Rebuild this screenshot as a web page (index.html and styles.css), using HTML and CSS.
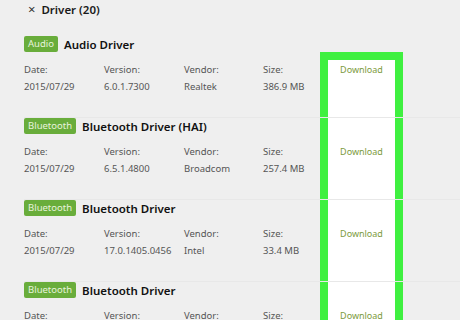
FILE: index.html
```html
<!DOCTYPE html>
<html>

<head>
    <meta charset="utf-8">
    <title>Driver</title>

    <link rel="stylesheet" href="styles.css">
</head>

<body>

    <div class="page">
        <header class="top-bar">
            <span class="close">&times;</span>
            <span class="top-title">Driver (20)</span>
        </header>

        <div class="highlight"></div>

        <section class="driver">
            <div class="driver-head">
                <span class="badge">Audio</span>
                <span class="driver-name">Audio Driver</span>
            </div>
            <div class="meta">
                <div><span class="label">Date:</span>2015/07/29</div>
                <div><span class="label">Version:</span>6.0.1.7300</div>
                <div><span class="label">Vendor:</span>Realtek</div>
                <div><span class="label">Size:</span>386.9 MB</div>
                <a class="download">Download</a>
            </div>
        </section>

        <section class="driver">
            <div class="driver-head">
                <span class="badge">Bluetooth</span>
                <span class="driver-name">Bluetooth Driver (HAI)</span>
            </div>
            <div class="meta">
                <div><span class="label">Date:</span>2015/07/29</div>
                <div><span class="label">Version:</span>6.5.1.4800</div>
                <div><span class="label">Vendor:</span>Broadcom</div>
                <div><span class="label">Size:</span>257.4 MB</div>
                <a class="download">Download</a>
            </div>
        </section>

        <section class="driver">
            <div class="driver-head">
                <span class="badge">Bluetooth</span>
                <span class="driver-name">Bluetooth Driver</span>
            </div>
            <div class="meta">
                <div><span class="label">Date:</span>2015/07/29</div>
                <div><span class="label">Version:</span>17.0.1405.0456</div>
                <div><span class="label">Vendor:</span>Intel</div>
                <div><span class="label">Size:</span>33.4 MB</div>
                <a class="download">Download</a>
            </div>
        </section>

        <section class="driver">
            <div class="driver-head">
                <span class="badge">Bluetooth</span>
                <span class="driver-name">Bluetooth Driver</span>
            </div>
            <div class="meta">
                <div><span class="label">Date:</span>2015/07/29</div>
                <div><span class="label">Version:</span>17.0.1405.0456</div>
                <div><span class="label">Vendor:</span>Intel</div>
                <div><span class="label">Size:</span>33.4 MB</div>
                <a class="download">Download</a>
            </div>
        </section>
    </div>

</body>

</html>
```

FILE: styles.css
```css
/* Page */

body {
    margin: 0;
    background: #efefef;
    font-family: "Noto Sans", "Open Sans", sans-serif;
    color: #222;
    overflow: hidden;
}

.page {
    position: relative;
    height: 320px;
    overflow: hidden;
}

/* Top bar */

.top-bar {
    position: relative;
    z-index: 2;
    display: flex;
    align-items: center;
    height: 18px;
    padding-left: 28px;
    gap: 6px;
}

.close {
    font-size: 13px;
    color: #333;
}

.top-title {
    font-size: 11.5px;
    font-weight: 600;
    color: #1a1a1a;
}

/* Highlight box */

.highlight {
    position: absolute;
    left: 320px;
    top: 52px;
    width: 67px;
    height: 300px;
    border: 8px solid #3ff040;
    background: #fff;
    z-index: 1;
}

/* Driver rows */

.driver {
    position: relative;
    z-index: 2;
    height: 82px;
    margin-left: 24px;
    box-sizing: border-box;
    border-bottom: 1px solid #e8e8e8;
}

.driver:first-of-type {
    margin-top: 18px;
}

.driver-head {
    display: flex;
    align-items: center;
    gap: 6px;
    height: 16px;
}

.badge {
    display: inline-block;
    padding: 0 4px;
    height: 16px;
    line-height: 16px;
    border-radius: 2px;
    background: #69ad3b;
    color: #e8f3dd;
    font-size: 9.5px;
}

.driver-name {
    font-size: 11.5px;
    font-weight: 600;
    color: #111;
}

.meta {
    display: grid;
    grid-template-columns: 80px 80px 79px 57px 83px;
    margin-top: 9px;
    font-size: 9.5px;
    line-height: 17px;
    color: #555;
}

.label {
    display: block;
}

.download {
    text-align: center;
    color: #7b9a3c;
    font-size: 9px;
}
```
